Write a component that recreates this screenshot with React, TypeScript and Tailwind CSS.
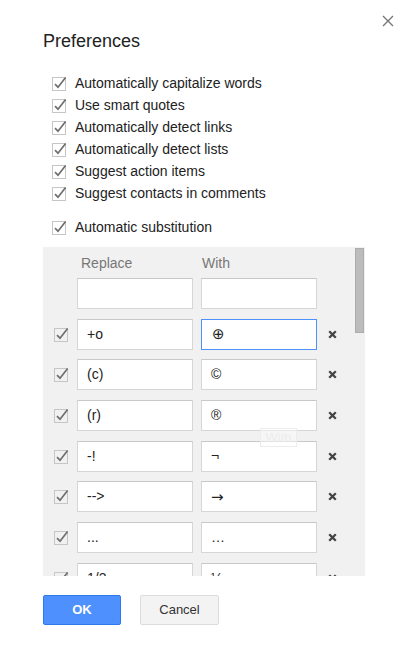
import { ReactNode } from 'react'

const FONT = "font-['Liberation_Sans',Arial,sans-serif]"

const OPTIONS = [
  'Automatically capitalize words',
  'Use smart quotes',
  'Automatically detect links',
  'Automatically detect lists',
  'Suggest action items',
  'Suggest contacts in comments',
]

const SUBS: { from: string; to: string; focused?: boolean; wide?: boolean }[] = [
  { from: '+o', to: '⊕', focused: true, wide: true },
  { from: '(c)', to: '©' },
  { from: '(r)', to: '®' },
  { from: '-!', to: '¬' },
  { from: '-->', to: '→', wide: true },
  { from: '...', to: '…' },
  { from: '1/2', to: '½' },
]

function Check() {
  return (
    <svg width="15" height="15" viewBox="0 0 15 15" className="shrink-0">
      <rect x="0.5" y="1.5" width="13" height="13" fill="none" stroke="#c6c6c6" />
      <path d="M3 8.2 L6 11.2 L13.6 1.4" fill="none" stroke="#6f6f6f" strokeWidth="1.7" />
    </svg>
  )
}

function Field({ value, focused, wide }: { value?: string; focused?: boolean; wide?: boolean }) {
  return (
    <div
      className={
        'w-[116px] h-[31px] bg-white flex items-center text-[14px] text-[#222] ' +
        (focused
          ? 'border border-[#4d90fe] pl-[10px]'
          : 'border border-[#d6d6d6] border-t-[#c8c8c8] pl-[9px]')
      }
    >
      <span className={wide ? "font-['DejaVu_Sans',sans-serif] text-[15px]" : ''}>{value}</span>
    </div>
  )
}

function Row({ children, checked, removable }: { children: ReactNode; checked?: boolean; removable?: boolean }) {
  return (
    <div className="flex items-center h-[31px] shrink-0">
      <div className="w-[34px] pl-[11px] flex items-center">{checked && <Check />}</div>
      <div className="flex gap-[8px]">{children}</div>
      {removable && (
        <svg width="9" height="9" viewBox="0 0 9 9" className="ml-[11px]">
          <path d="M1.2 1.2 L7.8 7.8 M7.8 1.2 L1.2 7.8" stroke="#444" strokeWidth="2.3" />
        </svg>
      )}
    </div>
  )
}

export default function App() {
  return (
    <div className={`${FONT} relative w-[406px] h-[654px] bg-white pl-[43px] text-[#222]`}>
      <button className="absolute top-[14px] left-[381px] p-[1px]">
        <svg width="12" height="12" viewBox="0 0 12 12">
          <path d="M1 1 L11 11 M11 1 L1 11" stroke="#777" strokeWidth="1.4" />
        </svg>
      </button>

      <h1 className="pt-[30px] text-[18px] leading-[22px] text-[#222]">Preferences</h1>

      <div className="mt-[20px] flex flex-col pl-[9px]">
        {OPTIONS.map(o => (
          <label key={o} className="flex items-center gap-[8px] h-[22px] text-[14px]">
            <Check />
            {o}
          </label>
        ))}
        <label className="flex items-center gap-[8px] h-[22px] text-[14px] mt-[12px]">
          <Check />
          Automatic substitution
        </label>
      </div>

      <div className="relative mt-[9px] w-[322px] h-[329px] bg-[#f1f1f1] overflow-hidden">
        <div className="absolute right-[1px] top-[1px] w-[9px] h-[85px] bg-[#bcbcbc] border border-[#acacac]" />

        <div className="flex h-[31px] pt-[6px] text-[14px] leading-[20px] text-[#777]">
          <div className="w-[38px]" />
          <div className="w-[121px]">Replace</div>
          <div>With</div>
        </div>

        <div className="flex flex-col gap-[9.7px]">
          <Row>
            <Field />
            <Field />
          </Row>
          {SUBS.map(s => (
            <Row key={s.from} checked removable>
              <Field value={s.from} />
              <Field value={s.to} focused={s.focused} wide={s.wide} />
            </Row>
          ))}
        </div>

        <div className="absolute left-[217px] top-[181px] w-[37px] h-[19px] border border-[#ececec] bg-white/40 text-[13px] leading-[17px] text-[#ececec] text-center">
          With
        </div>
      </div>

      <div className="flex gap-[19px] mt-[19px]">
        <button className="w-[78px] h-[30px] rounded-[2px] bg-[#4d90fe] border border-[#3079ed] text-white text-[13px] font-bold">
          OK
        </button>
        <button className="w-[79px] h-[30px] rounded-[2px] bg-[#f3f3f3] border border-[#dcdcdc] text-[#333] text-[13px]">
          Cancel
        </button>
      </div>
    </div>
  )
}
